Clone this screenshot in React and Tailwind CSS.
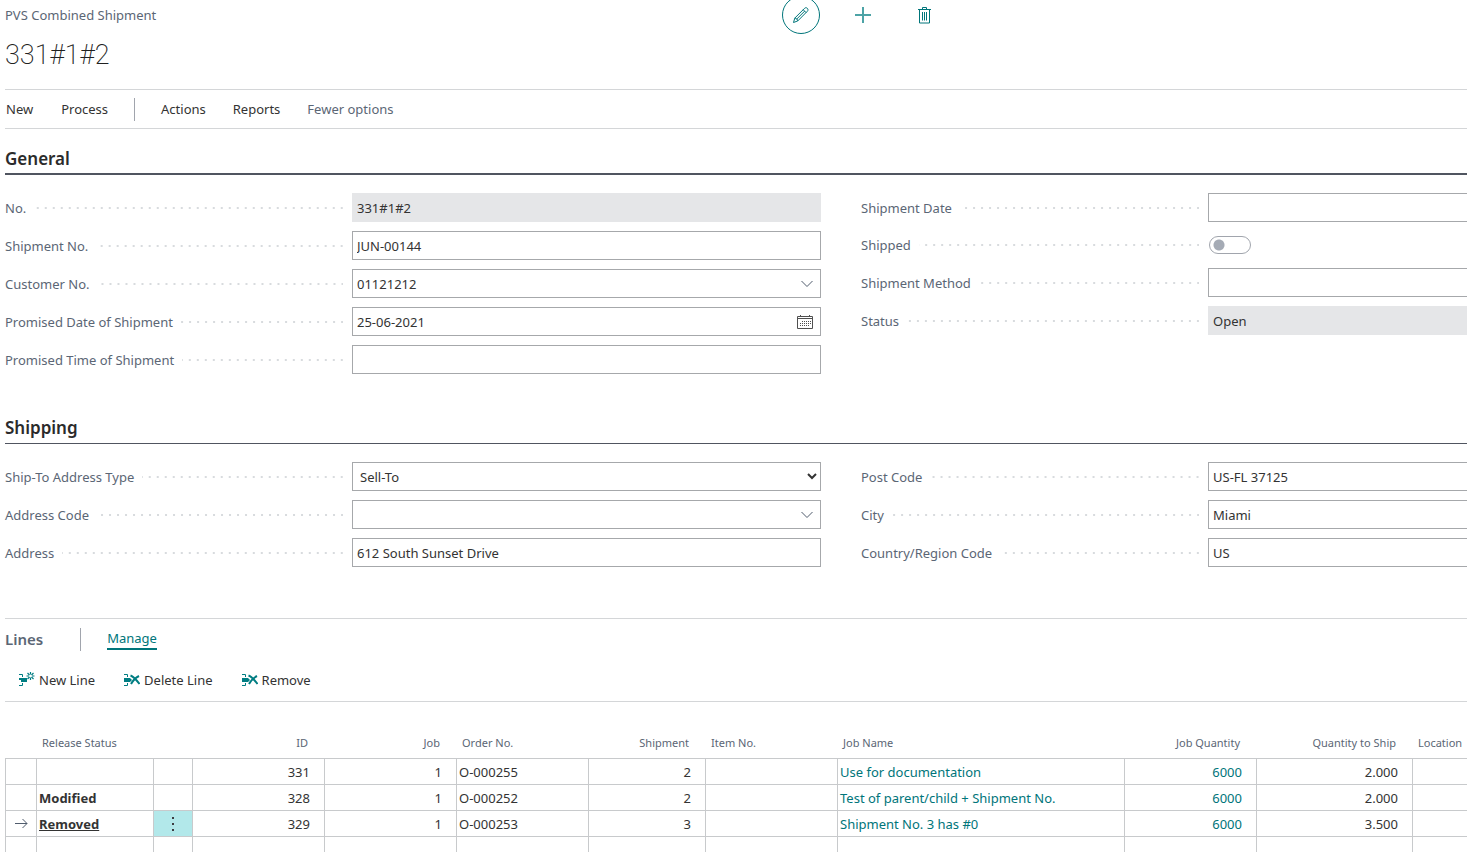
import { useState } from "react";

const leftGeneral = [
  { id: "no", label: "No.", value: "331#1#2", type: "readonly" },
  { id: "shipmentNo", label: "Shipment No.", value: "JUN-00144" },
  { id: "customerNo", label: "Customer No.", value: "01121212", type: "lookup" },
  { id: "promisedDate", label: "Promised Date of Shipment", value: "25-06-2021", type: "date" },
  { id: "promisedTime", label: "Promised Time of Shipment", value: "" },
];

const rightGeneral = [
  { id: "shipmentDate", label: "Shipment Date", value: "" },
  { id: "shipped", label: "Shipped", type: "toggle" },
  { id: "shipmentMethod", label: "Shipment Method", value: "" },
  { id: "status", label: "Status", value: "Open", type: "readonly" },
];

const leftShipping = [
  { id: "addressType", label: "Ship-To Address Type", value: "Sell-To", type: "select" },
  { id: "addressCode", label: "Address Code", value: "", type: "lookup" },
  { id: "address", label: "Address", value: "612 South Sunset Drive" },
];

const rightShipping = [
  { id: "postCode", label: "Post Code", value: "US-FL 37125" },
  { id: "city", label: "City", value: "Miami" },
  { id: "country", label: "Country/Region Code", value: "US" },
];

const lines = [
  { status: "", id: "331", job: "1", order: "O-000255", shipment: "2", name: "Use for documentation", quantity: "6000", ship: "2.000" },
  { status: "Modified", id: "328", job: "1", order: "O-000252", shipment: "2", name: "Test of parent/child + Shipment No.", quantity: "6000", ship: "2.000" },
  { status: "Removed", id: "329", job: "1", order: "O-000253", shipment: "3", name: "Shipment No. 3 has #0", quantity: "6000", ship: "3.500", selected: true },
  { status: "", id: "", job: "", order: "", shipment: "", name: "", quantity: "", ship: "" },
];

function ChevronIcon() {
  return (
    <svg width="14" height="8" viewBox="0 0 14 8" fill="none" stroke="#505c6d">
      <path d="M1.5 1l5.5 5.5L12.5 1" />
    </svg>
  );
}

function CalendarIcon() {
  return (
    <svg width="16" height="16" viewBox="0 0 16 16" fill="none" stroke="#505050">
      <path d="M.5 2.5h15v12H.5zM.5 4.500h15M3.5 1v2M12.5 1v2" />
      <path d="M5 7.5h9M3 9.5h11M3 11.5h9" strokeDasharray="1 1" />
    </svg>
  );
}

function PencilIcon() {
  return (
    <svg width="18" height="18" viewBox="0 0 18 18" fill="none" stroke="currentColor">
      <path d="M1.5 16.5l1.3-4.4L12.5 2.4c.8-.9 2-.9 2.8-.1.9.9.9 2 .1 2.9L5.8 14.9zM2.800 12.1c1.6.2 2.7 1.2 3 2.8M11.2 3.7l3 3M4.500 13.300l8.200-8.200" />
    </svg>
  );
}

function PlusIcon() {
  return (
    <svg width="16" height="16" viewBox="0 0 16 16" fill="none" stroke="#4da3a6" strokeWidth="2">
      <path d="M8 0v16M0 8h16" />
    </svg>
  );
}

function TrashIcon() {
  return (
    <svg width="13" height="17" viewBox="0 0 13 17" fill="none" stroke="currentColor">
      <path d="M0 2.5h13M4.5 2.5v-2h4v2M1.5 2.5v13.5h10V2.5M4.5 5v8.5M6.5 5v8.5M8.5 5v8.5" />
    </svg>
  );
}

function NewLineIcon() {
  return (
    <svg width="16" height="16" viewBox="0 0 16 16" fill="none" stroke="#007d82">
      <path d="M0 2.5h3.500V5M3.500 11v2.500H0" />
      <path d="M0 6h8v4H2V8H0z" fill="#007d82" stroke="none" />
      <path
        d="M11.500 0v2.500M11.500 5.500V8M7.500 4H10M13 4h2.500M8.500 1l2 2M14.500 1l-2 2M8.500 7l2-2M14.500 7l-2-2"
        strokeWidth="1.200"
      />
    </svg>
  );
}

function RemoveLineIcon() {
  return (
    <svg width="16" height="16" viewBox="0 0 16 16" fill="none" stroke="#007d82">
      <path d="M0 2.5h3.500V5M3.500 11v2.500H0" />
      <path d="M0 6h6l2 2-2 2H0z" fill="#007d82" stroke="none" />
      <path d="M6.500 3.500c3 1 6 4.500 9 8.500M15 4c-3 1.500-6 4.500-8 8" strokeWidth="2" />
    </svg>
  );
}

function ArrowIcon() {
  return (
    <svg width="13" height="11" viewBox="0 0 13 11" fill="none" stroke="#505c6d" className="ml-[9px]">
      <path d="M0 5.5h12M7.5 1L12 5.5 7.5 10" />
    </svg>
  );
}

function Control({ field, open }) {
  const [value, setValue] = useState(field.value);
  const box = `flex h-[29px] min-w-0 flex-1 items-center border border-[#a6a8ab] ${open ? "border-r-0" : ""}`;

  if (field.type === "toggle") {
    return (
      <div className="flex flex-1 items-center pl-px">
        <input
          id={field.id}
          type="checkbox"
          role="switch"
          className="h-[18px] w-[42px] appearance-none rounded-full border border-[#a1a5ad] bg-[radial-gradient(circle_at_9px_8px,#a5abb5_5px,transparent_6px)]"
        />
      </div>
    );
  }

  if (field.type === "readonly") {
    return (
      <input
        id={field.id}
        readOnly
        value={field.value}
        className="h-[29px] min-w-0 flex-1 bg-[#e5e6e8] px-[5px] text-[#333333] outline-none"
      />
    );
  }

  if (field.type === "select") {
    return (
      <select id={field.id} defaultValue={field.value} className={`${box} bg-white pl-[3px] text-[#333333]`}>
        <option>Sell-To</option>
        <option>Custom</option>
      </select>
    );
  }

  return (
    <div className={box}>
      <input
        id={field.id}
        value={value}
        onChange={(e) => setValue(e.target.value)}
        className="h-full min-w-0 flex-1 px-1 text-[#333333] outline-none"
      />
      {field.type === "lookup" && (
        <button aria-label={`Look up ${field.label}`} className="pr-1.5">
          <ChevronIcon />
        </button>
      )}
      {field.type === "date" && (
        <button aria-label="Open calendar" className="pr-[7px]">
          <CalendarIcon />
        </button>
      )}
    </div>
  );
}

function FieldColumn({ fields, open }) {
  return (
    <div className="flex min-w-0 flex-col gap-[9px]">
      {fields.map((field) => (
        <div key={field.id} className={`flex items-center ${field.type === "toggle" ? "h-7" : "h-[29px]"}`}>
          <div className="flex w-[347px] shrink-0 items-center gap-2 pr-[9px]">
            <label htmlFor={field.id} className="whitespace-nowrap text-[#5b6675]">
              {field.label}
            </label>
            <span className="h-0.5 flex-1 bg-[linear-gradient(90deg,transparent_6px,#d8dbde_6px)] bg-[length:8px_2px] bg-right" />
          </div>
          <Control field={field} open={open} />
        </div>
      ))}
    </div>
  );
}

function Section({ title, className, left, right }) {
  return (
    <section>
      <h2 className={`flex h-[31px] items-center border-[#505560] text-[17px] font-semibold text-[#2b2b2b] ${className}`}>
        {title}
      </h2>
      <div className="mt-[18px] grid grid-cols-[816fr_606fr] gap-10">
        <FieldColumn fields={left} />
        <FieldColumn fields={right} open />
      </div>
    </section>
  );
}

function LinesTable() {
  const head = "pt-[31px] align-top text-[11px] font-normal text-[#5b6675] whitespace-nowrap";
  const cell = "h-[26px] border-t border-l border-[#c8cacc] p-0 whitespace-nowrap";

  return (
    <table className="w-full table-fixed border-separate border-spacing-0 text-[#333333]">
      <colgroup>
        <col className="w-[31px]" />
        <col className="w-[117px]" />
        <col className="w-[39px]" />
        <col className="w-[132px]" />
        <col className="w-[132px]" />
        <col className="w-[132px]" />
        <col className="w-[117px]" />
        <col className="w-[132px]" />
        <col />
        <col className="w-[132px]" />
        <col className="w-[156px]" />
        <col className="w-[55px]" />
      </colgroup>
      <thead>
        <tr className="h-14">
          <th className={head} />
          <th className={`${head} pl-1.5 text-left`}>Release Status</th>
          <th className={head} />
          <th className={`${head} pr-4 text-right`}>ID</th>
          <th className={`${head} pr-4 text-right`}>Job</th>
          <th className={`${head} pl-1.5 text-left`}>Order No.</th>
          <th className={`${head} pr-4 text-right`}>Shipment</th>
          <th className={`${head} pl-1.5 text-left`}>Item No.</th>
          <th className={`${head} pl-1.5 text-left`}>Job Name</th>
          <th className={`${head} pr-4 text-right`}>Job Quantity</th>
          <th className={`${head} pr-4 text-right`}>Quantity to Ship</th>
          <th className={`${head} pl-1.5 text-left`}>Location</th>
        </tr>
      </thead>
      <tbody>
        {lines.map((line, index) => (
          <tr key={index}>
            <td className={cell}>{line.selected && <ArrowIcon />}</td>
            <td className={`${cell} pl-0.5 font-bold ${line.selected ? "underline" : ""}`}>{line.status}</td>
            <td className={`${cell} text-center ${line.selected ? "bg-[#b2e8ea]" : ""}`}>
              {line.selected && (
                <button aria-label="Show more options" className="block w-full">
                  <svg width="2" height="14" viewBox="0 0 2 14" fill="#3c3c41" className="mx-auto">
                    <path d="M0 0h2v2H0zM0 6h2v2H0zM0 12h2v2H0z" />
                  </svg>
                </button>
              )}
            </td>
            <td className={`${cell} pr-3.5 text-right`}>{line.id}</td>
            <td className={`${cell} pr-3.5 text-right`}>{line.job}</td>
            <td className={`${cell} pl-0.5`}>{line.order}</td>
            <td className={`${cell} pr-3.5 text-right`}>{line.shipment}</td>
            <td className={cell} />
            <td className={`${cell} pl-0.5`}>
              {line.name && <a href="#job" className="text-[#00757a]">{line.name}</a>}
            </td>
            <td className={`${cell} pr-3.5 text-right`}>
              {line.quantity && <a href="#quantity" className="text-[#00757a]">{line.quantity}</a>}
            </td>
            <td className={`${cell} pr-3.5 text-right`}>{line.ship}</td>
            <td className={cell} />
          </tr>
        ))}
      </tbody>
    </table>
  );
}

export default function App() {
  return (
    <div className="h-screen overflow-hidden bg-white pl-[5px] font-['Noto_Sans',sans-serif] text-[13px] leading-5">
      <header className="grid h-[89px] grid-cols-[777fr_685fr]">
        <div>
          <p className="pt-[5px] text-[#5b6675]">PVS Combined Shipment</p>
          <h1 className="mt-3 font-['Roboto',sans-serif] text-[27px] leading-9 font-extralight text-[#212121]">331#1#2</h1>
        </div>
        <div className="-mt-1 flex h-[38px] items-center text-[#00757a]">
          <button aria-label="Edit" className="flex size-[38px] items-center justify-center rounded-full border border-[#00757a]">
            <PencilIcon />
          </button>
          <button aria-label="New" className="ml-[35px]">
            <PlusIcon />
          </button>
          <button aria-label="Delete" className="ml-[47px]">
            <TrashIcon />
          </button>
        </div>
      </header>

      <nav className="flex h-10 items-center border-y border-[#d4d6d8] pl-px text-[#333333]">
        <button>New</button>
        <button className="ml-7">Process</button>
        <span className="mx-[26px] h-[23px] w-px bg-[#a1a5ad]" />
        <button>Actions</button>
        <button className="ml-[27px]">Reports</button>
        <button className="ml-[27px] text-[#5b6675]">Fewer options</button>
      </nav>

      <main className="mt-[15px]">
        <Section title="General" className="border-b-2" left={leftGeneral} right={rightGeneral} />
        <Section title="Shipping" className="mt-[39px] border-b" left={leftShipping} right={rightShipping} />

        <section className="mt-[51px] border-t border-[#d4d6d8]">
          <div className="flex h-10 items-center">
            <h2 className="text-[15px] font-semibold text-[#5b6675]">Lines</h2>
            <span className="mr-[26px] ml-[37px] h-[23px] w-px bg-[#a1a5ad]" />
            <button className="border-b-2 border-[#00757a] text-[#00757a]">Manage</button>
          </div>
          <div className="flex h-[43px] items-center gap-[29px] border-b border-[#d4d6d8] pl-3.5 text-[#333333]">
            <button className="flex items-center gap-1">
              <NewLineIcon />
              New Line
            </button>
            <button className="flex items-center gap-1">
              <RemoveLineIcon />
              Delete Line
            </button>
            <button className="flex items-center gap-1">
              <RemoveLineIcon />
              Remove
            </button>
          </div>
          <LinesTable />
        </section>
      </main>
    </div>
  );
}
